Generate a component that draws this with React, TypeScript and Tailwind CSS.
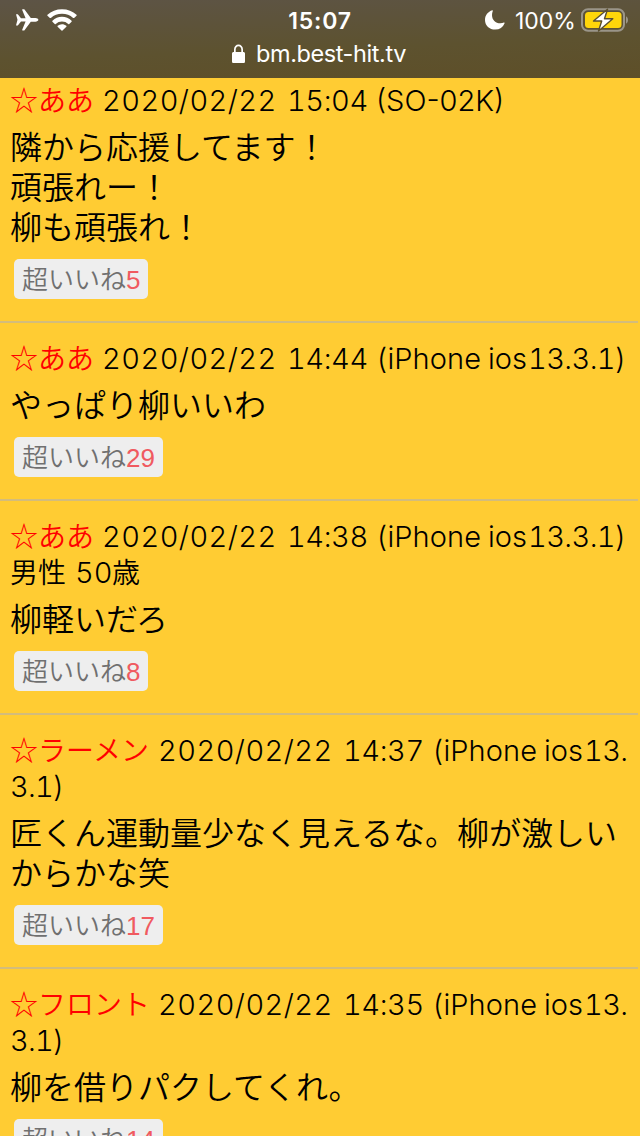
type Post = {
  name: string;
  nameWidth: string;
  time: string;
  device: string[];
  extra?: string;
  profile?: boolean;
  body: string[];
  likes: number;
};

const IPHONE = ["(iPhone", "ios", "13.3.1)"];
const IPHONE_WRAPPED = ["(iPhone", "ios", "13."];

const posts: Post[] = [
  {
    name: "☆ああ",
    nameWidth: "w-[92px]",
    time: "15:04",
    device: ["(SO-02K)"],
    body: ["隣から応援してます！", "頑張れー！", "柳も頑張れ！"],
    likes: 5,
  },
  {
    name: "☆ああ",
    nameWidth: "w-[92px]",
    time: "14:44",
    device: IPHONE,
    body: ["やっぱり柳いいわ"],
    likes: 29,
  },
  {
    name: "☆ああ",
    nameWidth: "w-[92px]",
    time: "14:38",
    device: IPHONE,
    profile: true,
    body: ["柳軽いだろ"],
    likes: 8,
  },
  {
    name: "☆ラーメン",
    nameWidth: "w-[148px]",
    time: "14:37",
    device: IPHONE_WRAPPED,
    extra: "3.1)",
    body: ["匠くん運動量少なく見えるな。柳が激しい", "からかな笑"],
    likes: 17,
  },
  {
    name: "☆フロント",
    nameWidth: "w-[148px]",
    time: "14:35",
    device: IPHONE_WRAPPED,
    extra: "3.1)",
    body: ["柳を借りパクしてくれ。"],
    likes: 14,
  },
];

const cjk = "font-['Noto_Sans_CJK_JP',sans-serif] font-[350]";

function StatusBar() {
  return (
    <header className="flex h-[78px] shrink-0 flex-col bg-[linear-gradient(178deg,#5d5446_0%,#5d522f_60%,#5e4f28_100%)] font-['Inter',sans-serif] text-white">
      <div className="grid h-10 grid-cols-[1fr_auto_1fr] items-center pr-[12px] pl-4">
        <div className="flex items-center gap-[8px]">
          <svg width="23" height="22" viewBox="0 0 23 22" fill="currentColor">
            <path d="M0 5.200h1.800l3.200 4h4.600L6.200.9C6 .4 6.200.2 6.600.2h1.700l6.500 8.700h4.700c1.500 0 2.900.9 2.900 1.900s-1.400 1.900-2.900 1.900h-4.700l-6.500 8.700H6.600c-.4 0-.6-.2-.4-.7l3.400-8.300H5l-3.200 4H0l1.500-5.600z" />
          </svg>
          <svg width="30" height="22" viewBox="0 0 31 22" fill="currentColor">
            <path d="M15.500 0c5.800 0 11.200 2.300 15 6.100.3.300.3.700 0 1L28 9.600c-.3.300-.7.300-1 0A16.500 16.500 0 0 0 4 9.600c-.3.300-.7.300-1 0L.5 7.100c-.3-.3-.3-.7 0-1C4.300 2.300 9.700 0 15.500 0z" transform="scale(1 .92)" />
            <path d="M15.500 7.700c3.800 0 7.300 1.500 9.900 4 .3.300.3.700 0 1l-2.400 2.400c-.3.300-.7.300-1 0a9.500 9.500 0 0 0-13 0c-.3.300-.7.300-1 0l-2.400-2.400c-.3-.3-.3-.7 0-1a14 14 0 0 1 9.900-4z" />
            <path d="M15.500 15.300c1.700 0 3.300.6 4.500 1.700.3.300.3.600 0 .9l-4 3.900c-.3.300-.7.300-1 0l-4-3.900c-.3-.3-.3-.6 0-.9a6.600 6.600 0 0 1 4.500-1.700z" />
          </svg>
        </div>
        <div className="mt-[2px] mr-[4px] text-[23px] leading-[28px] font-semibold tracking-[0.8px]">15:07</div>
        <div className="flex items-center justify-end">
          <svg width="20" height="20" viewBox="0 0 20 20" fill="currentColor">
            <path d="M7.300.3c.4-.1.700.3.500.7A11 11 0 0 0 7 5c0 5 3.500 8.300 8.300 8.300 1.400 0 2.600-.2 3.600-.7.500-.2.900.2.700.7A10.200 10.200 0 0 1 10.200 19.600C4.500 19.600 0 15.500 0 9.900 0 5.400 3 1.500 7.300.3z" />
          </svg>
          <span className="mt-[2px] ml-[10px] w-[66px] text-[23px] leading-[28px] whitespace-nowrap">100%</span>
          <svg width="47" height="24" viewBox="0 0 47 24">
            <rect x="1" y="1.200" width="42" height="21.500" rx="6" fill="none" stroke="#9a9589" strokeWidth="2" />
            <rect x="4" y="4" width="36.500" height="16" rx="3.500" fill="#ffd60a" />
            <path d="M45 8.300c1.300.7 2 2 2 3.700s-.7 3-2 3.700z" fill="#9a9589" />
            <path d="M26.500 1.200 12.500 13h8.200L17.500 23l14.300-12.200h-8.300z" fill="#fff" stroke="#5a5030" strokeWidth="1.400" strokeLinejoin="round" />
          </svg>
        </div>
      </div>
      <div className="flex h-7 items-center justify-center pr-[2px]">
        <svg width="13" height="20" viewBox="0 0 13 20" fill="currentColor" className="mr-[11px]">
          <path d="M2 8V5.500a4.500 5 0 0 1 9 0V8h.4c.9 0 1.600.7 1.600 1.600v7.800c0 .9-.7 1.600-1.600 1.600H1.600C.7 19 0 18.300 0 17.400V9.600C0 8.700.7 8 1.600 8zm1.700 0h5.600V5.500c0-2-1.200-3.300-2.800-3.300S3.700 3.500 3.700 5.500z" />
        </svg>
        <span className="text-[23.500px] leading-[28px] tracking-[-0.4px]">bm.best-hit.tv</span>
      </div>
    </header>
  );
}

function Device({ parts }: { parts: string[] }) {
  if (parts.length === 1) {
    return <span className="shrink-0 proportional-nums">{parts[0]}</span>;
  }
  const [brand, os, version] = parts;
  return (
    <>
      <span className="w-[112px] shrink-0 tracking-[0.1px]">{brand}</span>
      <span className="w-[40px] shrink-0">{os}</span>
      <span className="shrink-0 tracking-[-0.6px]">{version}</span>
    </>
  );
}

function PostItem({ post }: { post: Post }) {
  return (
    <article className="mr-[2px] border-b-2 border-[#d3bc7c] pt-[18px] pb-[22px] pl-[10px]">
      <div className="font-['Inter',sans-serif] text-[29px] leading-[36px] font-light whitespace-nowrap tabular-nums">
        <div className="flex h-9">
          <span className={`${post.nameWidth} ${cjk} -mt-[2px] shrink-0 text-[28px] text-[#ff0000]`}>{post.name}</span>
          <span className="w-[185px] shrink-0 tracking-[0.45px]">2020/02/22</span>
          <span className="w-[89px] shrink-0 tracking-[-0.4px]">{post.time}</span>
          <Device parts={post.device} />
        </div>
        {post.extra && <div className="h-9 tracking-[-0.8px]">{post.extra}</div>}
        {post.profile && (
          <div className="flex h-9">
            <span className={`${cjk} -mt-[2px] w-[65px] text-[28px]`}>男性</span>
            <span className="w-[37px]">50</span>
            <span className={`${cjk} -mt-[2px] text-[28px]`}>歳</span>
          </div>
        )}
      </div>
      <div className={`${cjk} mt-[6px] mb-[14px] text-[32px] leading-[40px] whitespace-nowrap`}>
        {post.body.map((line) => (
          <p key={line}>{line}</p>
        ))}
      </div>
      <button className="ml-1 flex h-10 rounded-[5px] bg-[#eeeeee] px-2 text-[26px] leading-[40px]">
        <span className={`${cjk} -mt-[1px] text-[#707070]`}>超いいね</span>
        <span className="pt-px font-['Liberation_Sans',sans-serif] text-[#f05a60]">{post.likes}</span>
      </button>
    </article>
  );
}

export default function App() {
  return (
    <div lang="ja" className="flex h-[1136px] w-[640px] flex-col overflow-hidden bg-[#ffcc33] text-black">
      <StatusBar />
      <main className="min-h-0 flex-1 overflow-hidden">
        <div className="-mt-[13px]">
          {posts.map((post) => (
            <PostItem key={post.time} post={post} />
          ))}
        </div>
      </main>
    </div>
  );
}
